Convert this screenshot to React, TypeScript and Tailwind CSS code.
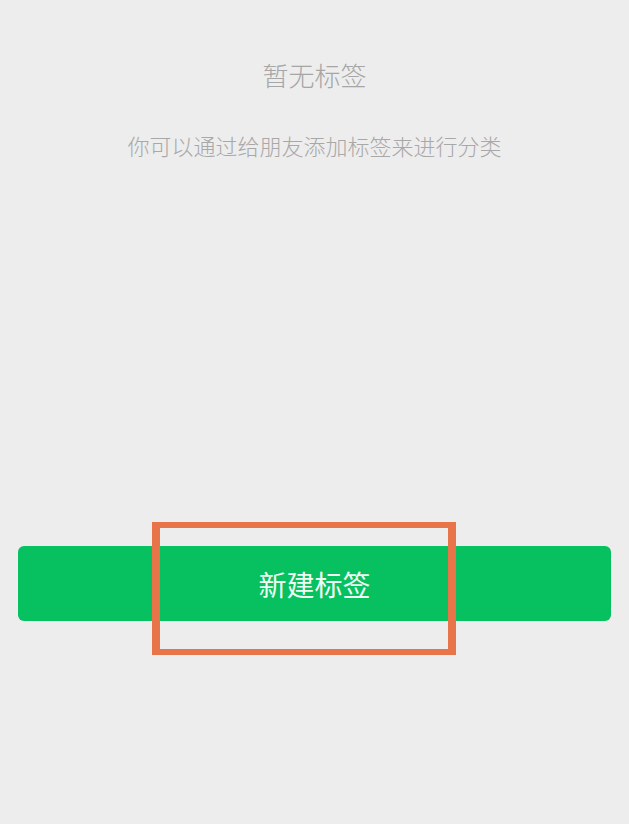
export default function App() {
  return (
    <div
      className="min-h-[824px] w-full bg-[#ededed] flex flex-col"
      style={{ fontFamily: '"Noto Sans CJK SC", "Noto Sans", sans-serif' }}
    >
      {/* Empty state */}
      <div className="flex flex-col items-center pt-[58px]">
        <h1 className="text-[26px] leading-[34px] font-light text-[#a6a6a6]">暂无标签</h1>
        <p className="mt-[37px] text-[22px] leading-[32px] font-light text-[#a8a8a8]">
          你可以通过给朋友添加标签来进行分类
        </p>
      </div>

      {/* Action */}
      <div className="relative mx-[18px] mt-[385px]">
        <button className="flex h-[75px] w-full items-center justify-center rounded-[6px] bg-[#07c160] text-[28px] text-[#f0fbf4]">
          新建标签
        </button>
        {/* highlight frame */}
        <div className="pointer-events-none absolute left-[134px] top-[-24px] h-[133px] w-[304px] border-x-[8px] border-y-[6px] border-[#e8744a]" />
      </div>
    </div>
  );
}
